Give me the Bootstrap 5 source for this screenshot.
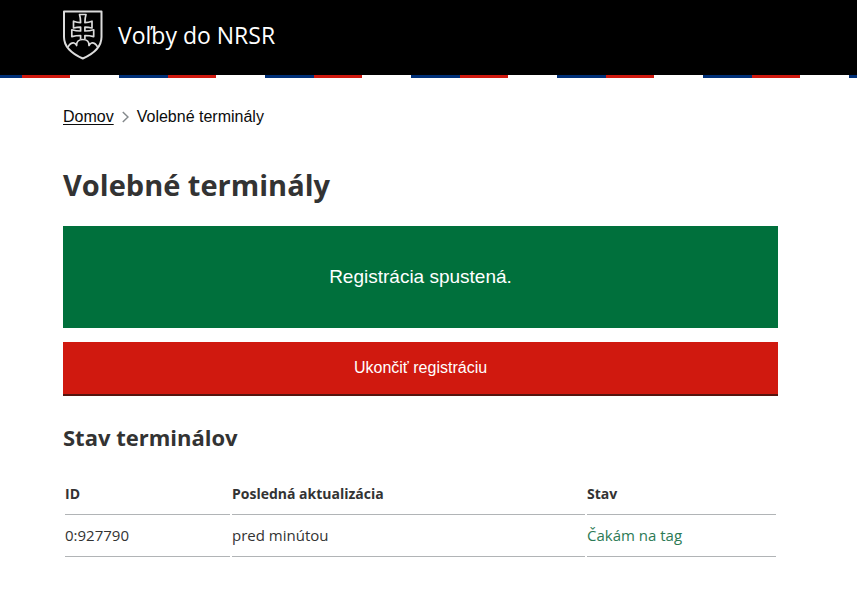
<!DOCTYPE html>
<html lang="sk">
<head>
<meta charset="utf-8">
<meta name="viewport" content="width=device-width, initial-scale=1">
<title>Volebné terminály</title>
<link rel="stylesheet" href="https://cdn.jsdelivr.net/npm/bootstrap@5.3.0/dist/css/bootstrap.min.css">
<style>
  body { font-family: "Open Sans", sans-serif; color: #333; background: #fff; }
  .page-wrap { padding-left: 63px; padding-right: 79px; max-width: 1180px; }
  .site-header { background: #000; }
  .site-bar { height: 75px; padding-bottom: 5px; }
  .site-name { gap: 15px; font-size: 23px; line-height: 32px; color: #fff; }
  .site-name:hover { color: #fff; }
  .site-crest { width: 40px; height: 50px; }
  .tricolor {
    height: 3px;
    background: #fff repeating-linear-gradient(to right, #003078 0 49px, #d0190f 49px 97px, #fff 97px 146px) -27px 0 / 146px 100%;
  }
  .ui-sans { font-family: "Liberation Sans", Arial, sans-serif; }
  .crumbs { font-size: 16px; line-height: 20px; padding-top: 29px; margin-bottom: 38px; color: #0b0c0c; }
  .crumbs a { color: #0b0c0c; text-underline-offset: 2px; }
  .crumbs svg { width: 7px; height: 12px; margin: 0 8px; }
  .page-title { font-size: 29px; line-height: 40px; margin-bottom: 21px; font-weight: 700; }
  .status-panel { background: #00703c; color: #fff; font-size: 19px; line-height: 24px; padding: 39px 16px; margin-bottom: 14px; }
  .btn-stop {
    --bs-btn-color: #fff; --bs-btn-bg: #d0190f; --bs-btn-hover-color: #fff; --bs-btn-hover-bg: #b0150c;
    --bs-btn-active-color: #fff; --bs-btn-active-bg: #b0150c; --bs-btn-border-width: 0;
    font-size: 16px; line-height: 20px; padding: 16px; margin-bottom: 28px; box-shadow: 0 2px 0 #55150f;
  }
  .section-title { font-size: 22px; line-height: 30px; margin-bottom: 21px; font-weight: 700; }
  .terminals { border-collapse: separate; border-spacing: 2px; font-size: 15px; line-height: 21px; }
  .terminals th, .terminals td { padding: 8px 0 10px; border-bottom: 1px solid #b1b4b6; text-align: left; }
  .terminals th { font-size: 14px; }
  .col-id { width: 165px; }
  .col-state { width: 189px; }
  .state-waiting { color: #2c7a55; }
</style>
<script defer src="https://cdn.jsdelivr.net/npm/bootstrap@5.3.0/dist/js/bootstrap.bundle.min.js"></script>
</head>
<body>
<header class="site-header">
  <div class="page-wrap site-bar d-flex align-items-center">
    <a href="#" class="site-name d-flex align-items-center text-decoration-none">
      <svg class="site-crest" viewBox="0 0 40 50" fill="none" stroke="#dcdcdc" stroke-width="1.7" stroke-linejoin="round" aria-hidden="true">
        <path stroke-width="2" d="M1 1.500H38.500V27C38.500 37 30 44 19.800 48.500C9.500 44 1 37 1 27Z"/>
        <path d="M17.600 29V25.500Q13 25.500 8.800 26.600V19.800Q13 21 17.600 21V17.200Q14 17.200 10.500 18V11.200Q14 12.600 17.600 12.600Q17.600 8 16.500 4.500H23Q21.900 8 21.900 12.600Q25.500 12.600 29 11.200V18Q25.500 17.200 21.900 17.200V21Q26.500 21 30.700 19.800V26.600Q26.500 25.500 21.900 25.500V29"/>
        <path d="M5 37Q7.500 32.500 11 33Q12.700 33.500 13.600 35.500Q13.400 29.500 19.800 29.500Q26.200 29.500 26 35.500Q27 33.500 28.600 33Q32 32.500 34.600 37"/>
      </svg>
      <span>Voľby do NRSR</span>
    </a>
  </div>
  <div class="tricolor"></div>
</header>

<main class="page-wrap">
  <nav class="crumbs ui-sans d-flex align-items-center" aria-label="Omrvinky">
    <a href="#">Domov</a>
    <svg viewBox="0 0 7 12" fill="none" stroke="#858a8d" stroke-width="1.500" aria-hidden="true"><path d="M.8 1L6 6L.8 11"/></svg>
    <span aria-current="page">Volebné terminály</span>
  </nav>

  <h1 class="page-title">Volebné terminály</h1>

  <div class="status-panel ui-sans text-center" role="status">Registrácia spustená.</div>
  <button type="button" class="btn btn-stop ui-sans w-100 rounded-0">Ukončiť registráciu</button>

  <h2 class="section-title">Stav terminálov</h2>
  <table class="terminals w-100">
    <thead>
      <tr>
        <th scope="col" class="col-id">ID</th>
        <th scope="col">Posledná aktualizácia</th>
        <th scope="col" class="col-state">Stav</th>
      </tr>
    </thead>
    <tbody>
      <tr>
        <td>0:927790</td>
        <td>pred minútou</td>
        <td class="state-waiting">Čakám na tag</td>
      </tr>
    </tbody>
  </table>
</main>
</body>
</html>
